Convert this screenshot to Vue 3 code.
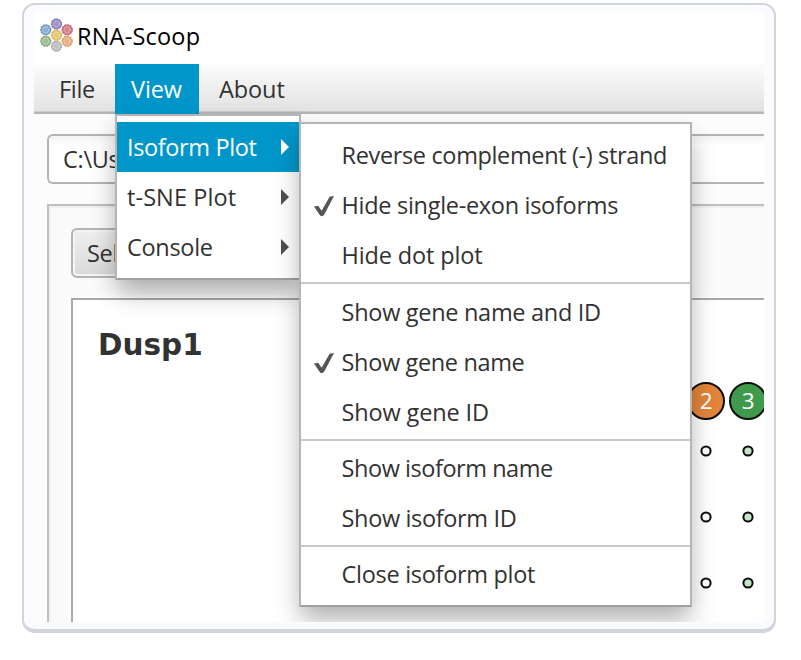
<script setup>
const petals = [
  { x: 22.5, y: 13, color: '#8272b4' },
  { x: 11.8, y: 18.8, color: '#6795bf' },
  { x: 33.2, y: 18.8, color: '#c65c67' },
  { x: 22.5, y: 24.2, color: '#dfb64f' },
  { x: 11.8, y: 30.2, color: '#82aa72' },
  { x: 33.2, y: 30.2, color: '#df9b62' },
  { x: 22.5, y: 35.2, color: '#acacac' }
]
const menuItems = [
  { text: 'Isoform Plot', cls: 'l-isoform', active: true },
  { text: 't-SNE Plot', cls: 'l-tsne' },
  { text: 'Console', cls: 'l-console' }
]
const groups = [
  [
    { text: 'Reverse complement (-) strand', cls: 'tight' },
    { text: 'Hide single-exon isoforms', checked: true },
    { text: 'Hide dot plot', cls: 'loose' }
  ],
  [
    { text: 'Show gene name and ID' },
    { text: 'Show gene name', checked: true, cls: 'tight' },
    { text: 'Show gene ID', cls: 'loose' }
  ],
  [{ text: 'Show isoform name', cls: 'tighter' }, { text: 'Show isoform ID', cls: 'tight' }],
  [{ text: 'Close isoform plot' }]
]
const dotRows = [151, 217, 283]
</script>

<template>
  <main class="page">
    <div class="card">
      <div class="window">
        <header class="titlebar">
          <svg class="logo" width="45" height="48" viewBox="0 0 45 48">
            <g v-for="(p, i) in petals" :key="i" :transform="`translate(${p.x} ${p.y})`">
              <circle r="5.4" :fill="p.color" opacity=".75" />
              <circle r="4.9" fill="none" :stroke="p.color" stroke-width="1.4" stroke-dasharray="1.7 1.1" />
              <circle r="2.9" fill="none" stroke="#fff" stroke-width="1" stroke-dasharray="1 1.4" opacity=".65" />
            </g>
          </svg>
          <span class="title">RNA-Scoop</span>
        </header>
        <nav class="menubar">
          <div class="menu file">File</div>
          <div class="menu view">View</div>
          <div class="menu about">About</div>
        </nav>
        <section class="content">
          <div class="field">C:\Us</div>
          <div class="panel">
            <div class="button">Sel</div>
            <div class="plot">
              <h1>Dusp1</h1>
              <svg class="dots" width="92" height="322" viewBox="0 0 92 322">
                <g stroke="#0c0c0c" stroke-width="2">
                  <circle cx="34" cy="101" r="18" fill="#e28539" />
                  <circle cx="76" cy="101" r="18" fill="#3f9a4b" />
                  <template v-for="y in dotRows" :key="y">
                    <circle cx="34" :cy="y" r="4.6" fill="#fff" />
                    <circle cx="76" :cy="y" r="4.6" fill="#c2e6c7" />
                  </template>
                </g>
                <g class="num" fill="#fff" text-anchor="middle">
                  <text x="34" y="109">2</text>
                  <text x="76" y="109">3</text>
                </g>
              </svg>
            </div>
          </div>
        </section>

        <div class="popup first">
          <div v-for="m in menuItems" :key="m.text" class="entry" :class="{ active: m.active }">
            <span :class="m.cls">{{ m.text }}</span>
            <svg width="8" height="16" viewBox="0 0 8 16"><path d="M0 0L8 8L0 16Z" fill="currentColor" /></svg>
          </div>
        </div>

        <div class="popup second">
          <div v-for="(g, i) in groups" :key="i" class="group">
            <div v-for="o in g" :key="o.text" class="option">
              <span class="mark">
                <svg v-if="o.checked" width="20" height="21" viewBox="0 0 20 21">
                  <path d="M0 10.6L4.2 9.8L7.6 14.8L15.6 .8L20 0L10 19Q7.8 21.2 5.9 19.2Z" fill="#555" />
                </svg>
              </span>
              <span :class="o.cls">{{ o.text }}</span>
            </div>
          </div>
        </div>
      </div>
    </div>
  </main>
</template>

<style>
body { background: #fff; }
</style>

<style scoped>
* { box-sizing: border-box; }
.page {
  height: 660px;
  padding: 3px 25px 0 22px;
  font: 23.5px/50px "Open Sans", "Noto Sans", sans-serif;
  letter-spacing: -0.3px;
  color: #323232;
  white-space: nowrap;
}
.card {
  height: 630px;
  padding: 6px 10px 7px;
  border: 2px solid #d1d4da;
  border-bottom-width: 4px;
  border-radius: 13px;
  background: #fafbfe;
}
.window {
  position: relative;
  height: 611px;
  overflow: hidden;
  background: #fcfcfc;
}
.titlebar { display: flex; height: 53px; background: #fff; color: #000; }
.logo { flex: none; margin-right: -2px; }
.title { line-height: 51px; letter-spacing: 0.2px; }
.menubar {
  display: flex;
  height: 50px;
  background: linear-gradient(#fcfcfc, #e2e2e2 47px, #b5b5b5 48px);
}
.file { width: 81px; padding-left: 25px; }
.view { width: 84px; padding-left: 16px; background: #0096c9; color: #fff; letter-spacing: -0.1px; }
.about { padding-left: 20px; letter-spacing: -0.1px; }
.content { padding: 20px 0 0 13px; }
.field {
  height: 50px;
  padding-left: 14px;
  border: 2px solid #b4b4b4;
  border-right: 0;
  border-radius: 6px 0 0 6px;
  background: linear-gradient(#f3f3f3, #fff 9px);
  line-height: 46px;
}
.panel {
  height: 418px;
  margin-top: 20px;
  padding: 22px 0 0 22px;
  border: solid #bfbfbf;
  border-width: 2px 0 0 2px;
  background: #fafafa;
  box-shadow: inset 2px 2px #f1f1f1;
}
.button {
  width: 110px;
  height: 50px;
  padding-left: 14px;
  border: 2px solid #b4b4b4;
  border-radius: 6px;
  background: linear-gradient(#efefef, #d9d9d9);
  box-shadow: inset 0 0 0 2px #f4f4f4;
  line-height: 47px;
}
.plot {
  display: flex;
  justify-content: space-between;
  height: 324px;
  margin-top: 20px;
  border: solid #a9a9a9;
  border-width: 2px 0 0 2px;
  background: #fff;
  box-shadow: -3px -3px #fdfdfd;
}
h1 {
  margin: 22px 0 0 25px;
  font: bold 29.5px/46px "DejaVu Sans", sans-serif;
  letter-spacing: 0;
}
.num { font-size: 22.5px; }
.popup {
  position: absolute;
  border: 2px solid #b5b5b5;
  border-bottom-color: #a0a0a0;
  background: #fff;
  box-shadow: 0 14px 24px -2px rgba(0, 0, 0, 0.32);
}
.first { left: 81px; top: 103px; width: 186px; height: 166px; padding-top: 6px; }
.entry {
  display: flex;
  align-items: center;
  justify-content: space-between;
  height: 50px;
  padding: 0 10px;
}
.entry svg { color: #505050; }
.active, .active svg { color: #fff; }
.active { background: #0096c9; }
.l-isoform { letter-spacing: -0.37px; }
.l-tsne { letter-spacing: 0.1px; }
.second { left: 265px; top: 111px; width: 393px; height: 485px; padding-top: 7px; }
.group + .group { margin-top: 1px; padding-top: 3px; border-top: 2px solid #c8c8c8; }
.group:nth-child(2) { padding-top: 4px; }
.option { display: flex; height: 50px; line-height: 49px; }
.mark { display: flex; align-items: center; width: 40.6px; padding-left: 12.6px; }
.loose { letter-spacing: -0.15px; }
.tight { letter-spacing: -0.36px; }
.tighter { letter-spacing: -0.46px; }
</style>
